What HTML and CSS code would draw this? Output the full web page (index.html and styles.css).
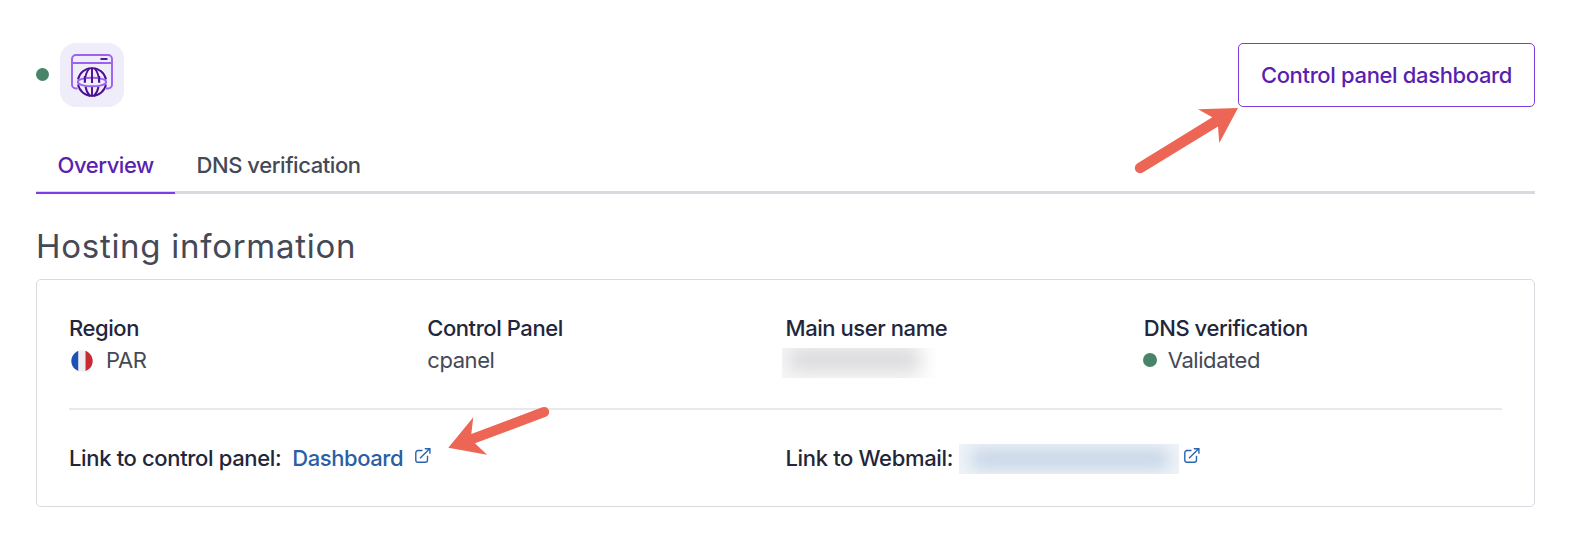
FILE: index.html
```
<!DOCTYPE html>
<html lang="en">
<head>
<meta charset="utf-8">
<title>Hosting overview</title>
<link rel="stylesheet" href="styles.css">
</head>
<body>
<main class="page">
  <header class="header">
    <div class="identity">
      <span class="dot"></span>
      <span class="product">
        <svg viewBox="0 0 64 64" width="64" height="64" fill="none" stroke-width="1.9">
          <path d="M17.500 45.500H16a4 4 0 0 1-4-4V16a4 4 0 0 1 4-4h32a4 4 0 0 1 4 4v25.500a4 4 0 0 1-4 4h-2M12 20h40" stroke="#9b61f0"/>
          <path d="M40.500 16h7" stroke="#4b0f92"/>
          <g stroke="#4b0f92">
            <path d="M18 36.500a14.300 14.300 0 0 1 28 0M18 41.500a14.300 14.300 0 0 0 28 0"/>
            <path d="M32 24.500V40M32 43v10.500M29.500 25Q24.800 31 24.800 39.500M34.500 25Q39.200 31 39.200 39.500M25.500 43.500Q26.500 49.500 30 53M38.500 43.500Q37.500 49.500 34 53"/>
          </g>
          <ellipse cx="32" cy="39" rx="14.200" ry="4.300" stroke="#9b61f0"/>
          <path d="M24.800 33v6.500M32 33v7M39.200 33v6.500" stroke="#4b0f92"/>
        </svg>
      </span>
    </div>
    <button class="button" type="button">Control panel dashboard</button>
  </header>

  <nav class="tabs">
    <a class="tab active">Overview</a>
    <a class="tab">DNS verification</a>
  </nav>

  <h2 class="title">Hosting information</h2>

  <section class="card">
    <div class="facts">
      <div class="fact">
        <div class="label">Region</div>
        <div class="value">
          <svg class="flag" viewBox="0 0 22 22" width="22" height="22">
            <clipPath id="round"><circle cx="11" cy="11" r="10.700"/></clipPath>
            <g clip-path="url(#round)">
              <path fill="#1f50b3" d="M0 0h7.500v22H0z"/>
              <path fill="#efeff1" d="M7.500 0h7v22h-7z"/>
              <path fill="#c92a31" d="M14.500 0H22v22h-7.500z"/>
            </g>
          </svg>
          <span>PAR</span>
        </div>
      </div>
      <div class="fact">
        <div class="label">Control Panel</div>
        <div class="value">cpanel</div>
      </div>
      <div class="fact">
        <div class="label">Main user name</div>
        <div class="value"><span class="mask mask-user"></span></div>
      </div>
      <div class="fact">
        <div class="label">DNS verification</div>
        <div class="value status"><span class="dot"></span><span>Validated</span></div>
      </div>
    </div>
    <div class="links">
      <div class="link-row">
        <span class="label">Link to control panel:</span>
        <a class="link">Dashboard</a>
        <svg class="external" viewBox="0 0 16 16" width="16" height="16"><path d="M7.500 2.500H3A2.200 2.200 0 0 0 .8 4.700V12A2.200 2.200 0 0 0 3 14.200h7.300a2.200 2.200 0 0 0 2.200-2.200V7.800M5 10.300l9.700-9.500M9.800.8h5.100v5"/></svg>
      </div>
      <div class="link-row">
        <span class="label">Link to Webmail:</span>
        <span class="mask mask-link"></span>
        <svg class="external" viewBox="0 0 16 16" width="16" height="16"><path d="M7.500 2.500H3A2.200 2.200 0 0 0 .8 4.700V12A2.200 2.200 0 0 0 3 14.200h7.300a2.200 2.200 0 0 0 2.200-2.200V7.800M5 10.300l9.700-9.500M9.800.8h5.100v5"/></svg>
      </div>
    </div>
  </section>

  <svg class="arrows" viewBox="0 0 1570 534" width="1570" height="534" fill="#ed6655">
    <path d="M1238 108L1198 109.300L1212.300 117.300L1137.200 163.600A5.200 5.200 0 0 0 1142.800 172.400L1218 126.500L1219.300 143Z"/>
    <path d="M448.300 447.700L473.300 417.300L471.300 434L542.300 407.200A5.100 5.100 0 0 1 545.800 416.800L475 443.300L487 454.700Z"/>
  </svg>
</main>
</body>
</html>
```
FILE: styles.css
```
* { box-sizing: border-box; }
body {
  margin: 0;
  background: #fff;
  color: #454956;
  font: 400 22px/32px Inter, "Liberation Sans", sans-serif;
  letter-spacing: -0.43px;
}
.page {
  position: relative;
  width: 1570px;
  height: 534px;
  padding: 43px 35px 0 36px;
  overflow: hidden;
}
.header { display: flex; justify-content: space-between; height: 64px; }
.identity { display: flex; align-items: center; gap: 11px; }
.dot { width: 13px; height: 13px; border-radius: 50%; background: #488467; flex: none; }
.identity .dot { margin-bottom: 1px; }
.product { width: 64px; height: 64px; border-radius: 16px; background: #f0edfb; }
.product svg { display: block; }
.button {
  width: 297px;
  height: 64px;
  padding: 0;
  border: 1px solid #7c3ce0;
  border-radius: 5px;
  background: #fff;
  color: #5a1fb0;
  font: 500 22px/32px Inter, "Liberation Sans", sans-serif;
  letter-spacing: -0.35px;
  white-space: nowrap;
}
.tabs {
  display: flex;
  height: 52px;
  margin-top: 35px;
  border-bottom: 3px solid #d9d9e0;
}
.tab { height: 52px; padding: 7px 21.5px 0; border-bottom: 2px solid transparent; font-weight: 500; white-space: nowrap; }
.tab.active { width: 139px; color: #5a1fb0; border-color: #7c3ce8; }
.title { margin: 32px 0 13px; font-size: 33px; line-height: 40px; font-weight: 400; letter-spacing: 0.72px; white-space: nowrap; }
.card { height: 228px; padding: 32px; border: 1px solid #d9dadf; border-radius: 5px; }
.facts {
  display: grid;
  grid-template-columns: repeat(4, 1fr);
  height: 98px;
  border-bottom: 2px solid #e9e9eb;
}
.label { font-weight: 500; color: #22263a; white-space: nowrap; }
.link-row .label { letter-spacing: -0.35px; }
.value { display: flex; align-items: center; height: 32px; }
.flag { margin: 1px 13px 0 2px; }
.status { gap: 11px; margin-left: -1px; }
.status .dot { width: 14px; height: 14px; }
.links { display: grid; grid-template-columns: 1fr 1fr; padding-top: 32px; }
.link-row { display: flex; align-items: center; height: 32px; }
.link { margin-left: 11px; font-weight: 500; color: #2a5fa6; }
.external { margin: -4px 0 0 12px; fill: none; stroke: #2a64ae; stroke-width: 1.4; }
.mask { display: block; align-self: flex-start; height: 30px; overflow: hidden; flex: none; }
.mask::before { content: ""; display: block; }
.mask-user { width: 154px; margin: 4px 0 0 -4px; background: linear-gradient(90deg, #f7f7f7 80%, #fefefe); }
.mask-user::before { width: 130px; height: 21px; margin: 1px 0 0 7px; background: #d8d8db; filter: blur(9px); }
.mask-link { width: 220px; margin: 2px 0 0 6px; background: #f0f4f9; }
.mask-link::before { width: 198px; height: 18px; margin: 6px 0 0 12px; background: #bfd0e4; filter: blur(9px); }
.mask-link + .external { margin-left: 5px; }
.arrows { position: absolute; left: 0; top: 0; pointer-events: none; }
```
